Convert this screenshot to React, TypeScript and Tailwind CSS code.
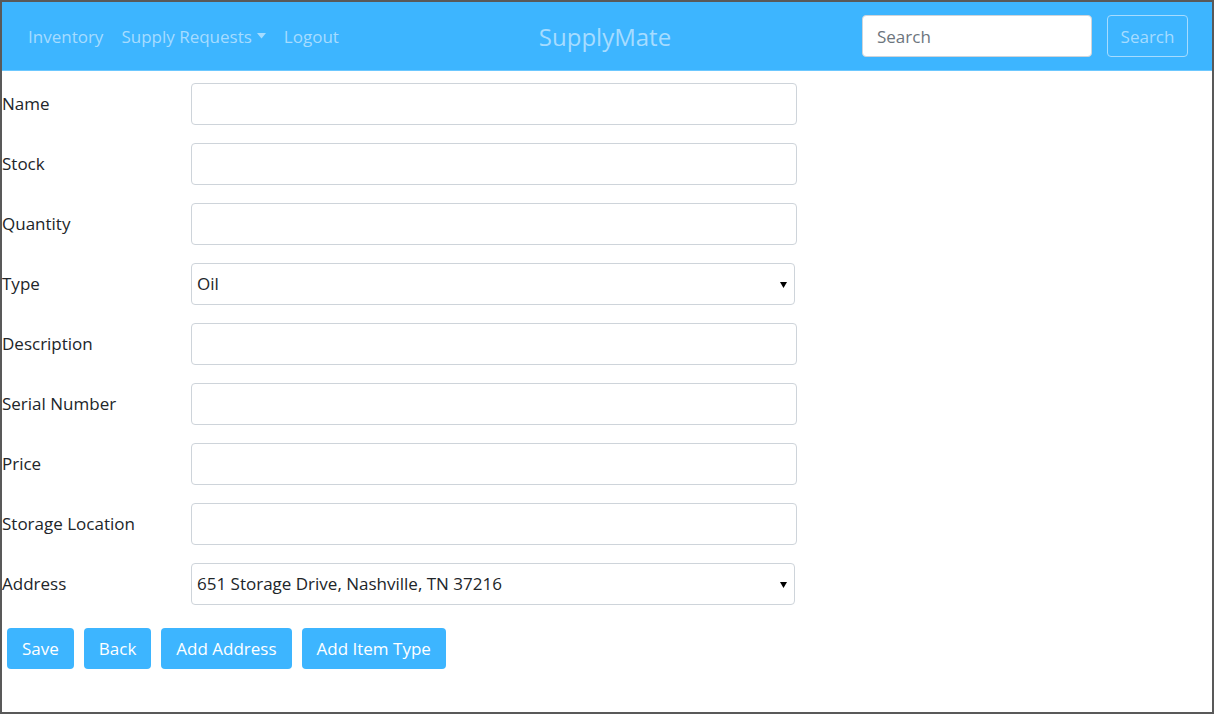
import React from "react"

const fields: { label: string; kind: "input" | "select"; value?: string }[] = [
  { label: "Name", kind: "input" },
  { label: "Stock", kind: "input" },
  { label: "Quantity", kind: "input" },
  { label: "Type", kind: "select", value: "Oil" },
  { label: "Description", kind: "input" },
  { label: "Serial Number", kind: "input" },
  { label: "Price", kind: "input" },
  { label: "Storage Location", kind: "input" },
  { label: "Address", kind: "select", value: "651 Storage Drive, Nashville, TN 37216" },
]

const buttons = ["Save", "Back", "Add Address", "Add Item Type"]

function Caret() {
  return (
    <svg width="9" height="6" viewBox="0 0 9 6" className="ml-[5px] mt-[-2px]">
      <path d="M0 0 L9 0 L4.5 5.5 Z" fill="currentColor" />
    </svg>
  )
}

export default function App() {
  return (
    <div
      className="w-[1214px] h-[714px] border-2 border-[#595959] bg-white text-[17px] text-[#212529] overflow-hidden"
      style={{ fontFamily: '"Open Sans", "Noto Sans", sans-serif' }}
    >
      <nav className="h-[69px] bg-[#3db5ff] flex items-center pl-[26px] pr-[24px] border-b border-[#6cc8ff]">
        <div className="flex items-center gap-[18px] text-[#a6dcff] w-[500px] pt-[1px]">
          <span>Inventory</span>
          <span className="flex items-center">
            Supply Requests
            <Caret />
          </span>
          <span>Logout</span>
        </div>
        <div className="flex-1 flex justify-center text-[24px] text-[#a6dcff] pr-[180px] pt-[1px]">SupplyMate</div>
        <div className="flex items-center gap-[15px]">
          <div className="w-[230px] h-[42px] bg-white rounded-[4px] border border-[#ced4da] flex items-center px-[14px] pt-[2px] text-[#6c757d]">
            Search
          </div>
          <div className="w-[81px] h-[42px] rounded-[4px] border border-[#a6dcff] flex items-center justify-center pt-[2px] text-[#a6dcff]">
            Search
          </div>
        </div>
      </nav>

      <div className="pt-[12px]">
        {fields.map((f) => (
          <div key={f.label} className="flex items-center mb-[18px] h-[42px]">
            <div className="w-[189px]">{f.label}</div>
            {f.kind === "input" ? (
              <div className="w-[606px] h-[42px] border border-[#ced4da] rounded-[4px] bg-white" />
            ) : (
              <div className="w-[604px] h-[42px] border border-[#ced4da] rounded-[4px] bg-white flex items-center justify-between pl-[5px] pr-[7px]">
                <span>{f.value}</span>
                <svg width="7" height="7" viewBox="0 0 7 7">
                  <path d="M0 1 L7 1 L3.5 7 Z" fill="#000" />
                </svg>
              </div>
            )}
          </div>
        ))}
        <div className="flex gap-[10px] pl-[5px] pt-[5px]">
          {buttons.map((b) => (
            <div
              key={b}
              className="h-[41px] px-[15px] bg-[#3db5ff] text-white rounded-[4px] flex items-center"
            >
              {b}
            </div>
          ))}
        </div>
      </div>
    </div>
  )
}
